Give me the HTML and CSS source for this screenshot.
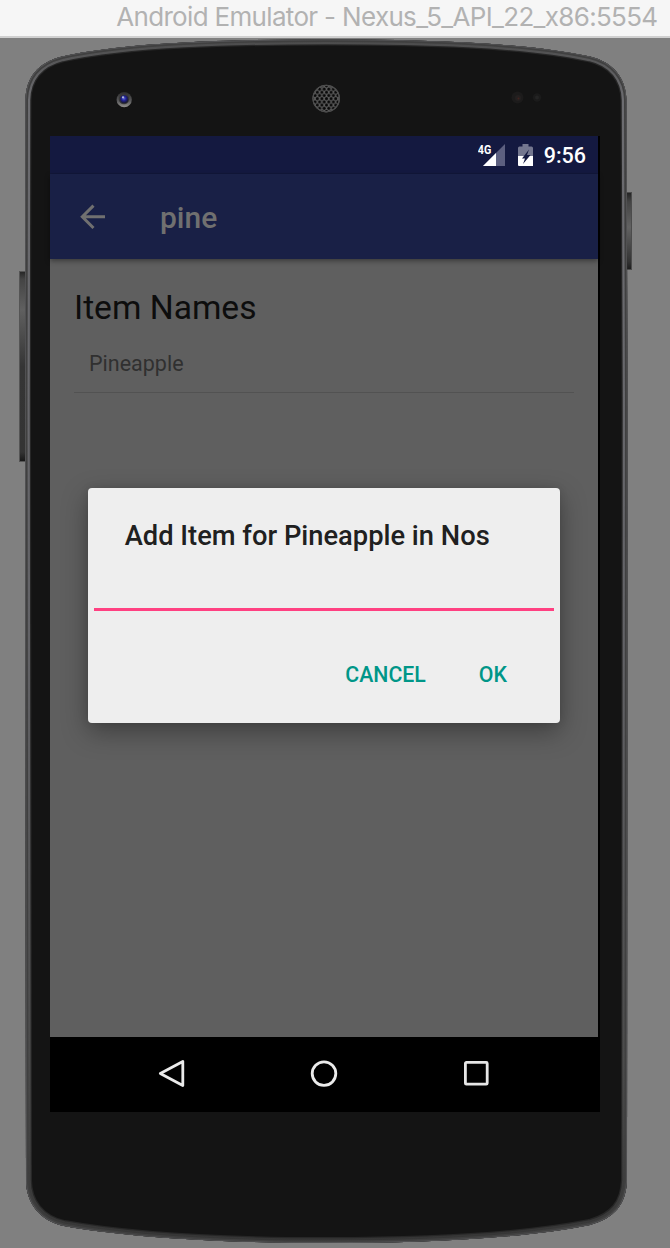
FILE: index.html
```html
<!DOCTYPE html>
<html lang="en">
<head>
<meta charset="utf-8">
<title>Android Emulator</title>
<link rel="stylesheet" href="styles.css">
</head>
<body>
<header class="window-title"><span>Android Emulator - Nexus_5_API_22_x86:5554</span></header>
<main class="stage">
  <svg class="device" viewBox="0 38 670 1210" width="670" height="1210" aria-hidden="true">
    <defs>
      <path id="body" d="M25.500 100C26 78 37 63 62 56.500C130 42 230 39.500 326 39.500C422 39.500 522 42 590 56.500C613 62 626 78 626.500 100L627.500 400L627 1180C626 1204 615 1218 590 1225C520 1239 420 1243 326 1243C230 1243 130 1238 64 1226C40 1221 26 1203 26 1180L25 400Z"/>
      <clipPath id="clip"><use href="#body"/></clipPath>
      <linearGradient id="rim" x1="0" y1="0" x2="0" y2="1">
        <stop offset="0" stop-color="#4b4b4b"/><stop offset=".05" stop-color="#6c6c70"/>
        <stop offset=".5" stop-color="#626266"/><stop offset=".85" stop-color="#4b4b4b"/><stop offset="1" stop-color="#353535"/>
      </linearGradient>
      <linearGradient id="keyL" x1="0" y1="0" x2="0" y2="1">
        <stop offset="0" stop-color="#252525"/><stop offset=".04" stop-color="#444"/><stop offset=".2" stop-color="#606060"/>
        <stop offset=".5" stop-color="#353535"/><stop offset=".95" stop-color="#343434"/><stop offset="1" stop-color="#171717"/>
      </linearGradient>
      <linearGradient id="keyR" x1="0" y1="0" x2="0" y2="1">
        <stop offset="0" stop-color="#222"/><stop offset=".12" stop-color="#444"/><stop offset=".45" stop-color="#626262"/>
        <stop offset=".9" stop-color="#333"/><stop offset="1" stop-color="#1c1c1c"/>
      </linearGradient>
      <radialGradient id="lens" cx=".45" cy=".4" r=".6">
        <stop offset="0" stop-color="#5a64e0"/><stop offset=".5" stop-color="#20208c"/><stop offset="1" stop-color="#17172c"/>
      </radialGradient>
      <linearGradient id="lensRing" x1="0" y1="0" x2="0" y2="1">
        <stop offset="0" stop-color="#2c2c2c"/><stop offset=".6" stop-color="#5c5c5e"/><stop offset="1" stop-color="#94928e"/>
      </linearGradient>
      <pattern id="mesh" x="324.200" y="97.100" width="4.600" height="6.400" patternUnits="userSpaceOnUse">
        <circle cx="2.300" cy="1.600" r="1.500" fill="#090909"/><circle cx="0" cy="4.800" r="1.500" fill="#090909"/><circle cx="4.600" cy="4.800" r="1.500" fill="#090909"/>
      </pattern>
    </defs>
    <rect x="19.500" y="271.500" width="7" height="190" fill="url(#keyL)" stroke="#555"/>
    <rect x="625.500" y="192.500" width="6" height="77" fill="url(#keyR)" stroke="#4c4c4c"/>
    <use href="#body" fill="#141414"/>
    <g clip-path="url(#clip)" fill="none">
      <use href="#body" stroke="#272727" stroke-width="12"/>
      <use href="#body" stroke="url(#rim)" stroke-width="9.500"/>
      <use href="#body" stroke="#404040" stroke-width="5"/>
      <use href="#body" stroke="#555557" stroke-width="1.600"/>
    </g>
    <circle cx="124.200" cy="99.700" r="7.600" fill="url(#lensRing)"/>
    <circle cx="124" cy="99" r="5.300" fill="#383839"/>
    <circle cx="124.200" cy="99.200" r="4" fill="url(#lens)"/>
    <circle cx="123" cy="97.300" r="1.100" fill="#b8c0d2"/>
    <circle cx="326.200" cy="98.600" r="13.800" fill="#5b5b5b"/>
    <circle cx="326.200" cy="98.600" r="12.600" fill="url(#mesh)"/>
    <circle cx="326.200" cy="98.600" r="13.300" fill="none" stroke="#4a4a4a"/>
    <circle cx="517.500" cy="97.500" r="6" fill="#1c1b1b"/><circle cx="518" cy="98" r="3" fill="#242020"/><circle cx="518.500" cy="98.500" r="1" fill="#40221e"/>
    <circle cx="537" cy="97.500" r="4.200" fill="#1b1b1b"/><circle cx="537" cy="97.500" r="2" fill="#242424"/>
  </svg>

  <section class="screen">
    <div class="status-bar">
      <svg class="signal" viewBox="0 0 28 24" width="28" height="24">
        <path d="M27 1V23H5Z" fill="#5d6080"/><path d="M18 10V23H5Z" fill="#fff"/>
        <text class="network" x="-.200" y="11" textLength="13.500" lengthAdjust="spacingAndGlyphs">4G</text>
      </svg>
      <svg class="battery" viewBox="0 0 15 23" width="15" height="23">
        <path d="M4.500 0h6v2.500H13.500Q15 2.500 15 4V12H0V4Q0 2.500 1.500 2.500H4.500Z" fill="#74778f"/>
        <path d="M0 12H15V22H1Q0 22 0 21Z" fill="#fff"/>
        <path d="M11 5.500L4 14.500H7L5 20L12.500 11H9Z" fill="#141941"/>
      </svg>
      <span class="clock">9:56</span>
    </div>
    <div class="app-bar">
      <svg class="back" viewBox="0 0 26 26" width="26" height="26"><path d="M25 12.800H3M13.500 1.600L2.300 12.800L13.500 24" fill="none" stroke="#707070" stroke-width="3"/></svg>
      <span class="app-title">pine</span>
    </div>
    <div class="content">
      <h1 class="heading">Item Names</h1>
      <div class="list-item">Pineapple</div>
      <div class="dialog" role="dialog">
        <h2 class="dialog-title">Add Item for Pineapple in Nos</h2>
        <div class="field"></div>
        <div class="actions"><span>CANCEL</span><span>OK</span></div>
      </div>
    </div>
    <div class="nav-bar">
      <svg viewBox="0 0 28 30" width="28" height="30"><path d="M24.800 2.500V26.500L2.300 14.500Z" fill="none" stroke="#ebebeb" stroke-width="2.800" stroke-linejoin="round"/></svg>
      <svg viewBox="0 0 28 28" width="28" height="28"><circle cx="14" cy="13.600" r="11.800" fill="none" stroke="#ebebeb" stroke-width="2.800"/></svg>
      <svg viewBox="0 0 28 28" width="28" height="28"><rect x="3.400" y="2.400" width="21.800" height="21.800" rx="1" fill="none" stroke="#e6e6e6" stroke-width="2.800"/></svg>
    </div>
  </section>
</main>
</body>
</html>
```
FILE: styles.css
```css
* { box-sizing: border-box; }
body {
  margin: 0;
  width: 670px;
  height: 1248px;
  overflow: hidden;
  background: #808080;
  font-family: Roboto, sans-serif;
}
.window-title {
  height: 38px;
  padding: 1px 12.5px 0 0;
  border-bottom: 2px solid #d0d0d0;
  background: #f6f6f6;
  color: #b2b2b2;
  font: 26px/32px Inter, sans-serif;
  letter-spacing: -0.67px;
  text-align: right;
  white-space: nowrap;
}
.stage {
  position: relative;
  height: 1210px;
  padding: 98px 70px 0 50px;
}
.device {
  position: absolute;
  inset: 0;
}
.screen {
  position: relative;
  display: flex;
  flex-direction: column;
  width: 550px;
  height: 976px;
  background: #000;
}
.status-bar {
  display: flex;
  align-items: flex-start;
  width: 548px;
  height: 38px;
  padding: 7px 12px 0 0;
  justify-content: flex-end;
  background: #141940;
  border-bottom: 1px solid #12173a;
}
.signal { margin-right: 12px; }
.network { font: bold 12px Roboto, sans-serif; fill: #fff; }
.battery { margin: 1px 11px 0 0; }
.clock {
  color: #fff;
  font-size: 21.5px;
  font-weight: 500;
  line-height: 26px;
}
.app-bar {
  position: relative;
  display: flex;
  align-items: center;
  width: 548px;
  height: 85px;
  padding-left: 30px;
  background: #192046;
  box-shadow: 0 2px 5px rgba(0, 0, 0, 0.4);
}
.app-title {
  margin: 2px 0 0 54px;
  color: #707070;
  font-size: 30px;
  font-weight: 500;
}
.content {
  width: 548px;
  height: 778px;
  padding: 29px 24px 0;
  background: #5f5f5f;
}
.heading {
  margin: 0;
  color: #0d0d0d;
  font-size: 33.6px;
  font-weight: 400;
  line-height: 40px;
}
.list-item {
  height: 65px;
  padding: 22px 15px 0;
  border-bottom: 1px solid #525252;
  color: #303030;
  font-size: 21.5px;
  line-height: 27px;
}
.dialog {
  width: 472px;
  height: 235px;
  margin: 95px 0 0 14px;
  padding: 0 6px;
  border-radius: 4px;
  background: #eee;
  box-shadow: 0 9px 26px rgba(0, 0, 0, 0.34), 0 0 8px rgba(0, 0, 0, 0.1);
}
.dialog-title {
  margin: 0;
  padding: 31px 0 0 30.7px;
  color: #202020;
  font-size: 27.3px;
  font-weight: 500;
  line-height: 34px;
  white-space: nowrap;
}
.field {
  height: 58px;
  border-bottom: 3px solid #ff4081;
}
.actions {
  display: flex;
  justify-content: flex-end;
  gap: 53px;
  padding: 50px 47px 0 0;
  color: #009688;
  font-size: 21.3px;
  font-weight: 500;
  line-height: 27px;
}
.nav-bar {
  display: flex;
  align-items: center;
  justify-content: space-between;
  height: 75px;
  padding: 0 110px 2px 108px;
}
```
